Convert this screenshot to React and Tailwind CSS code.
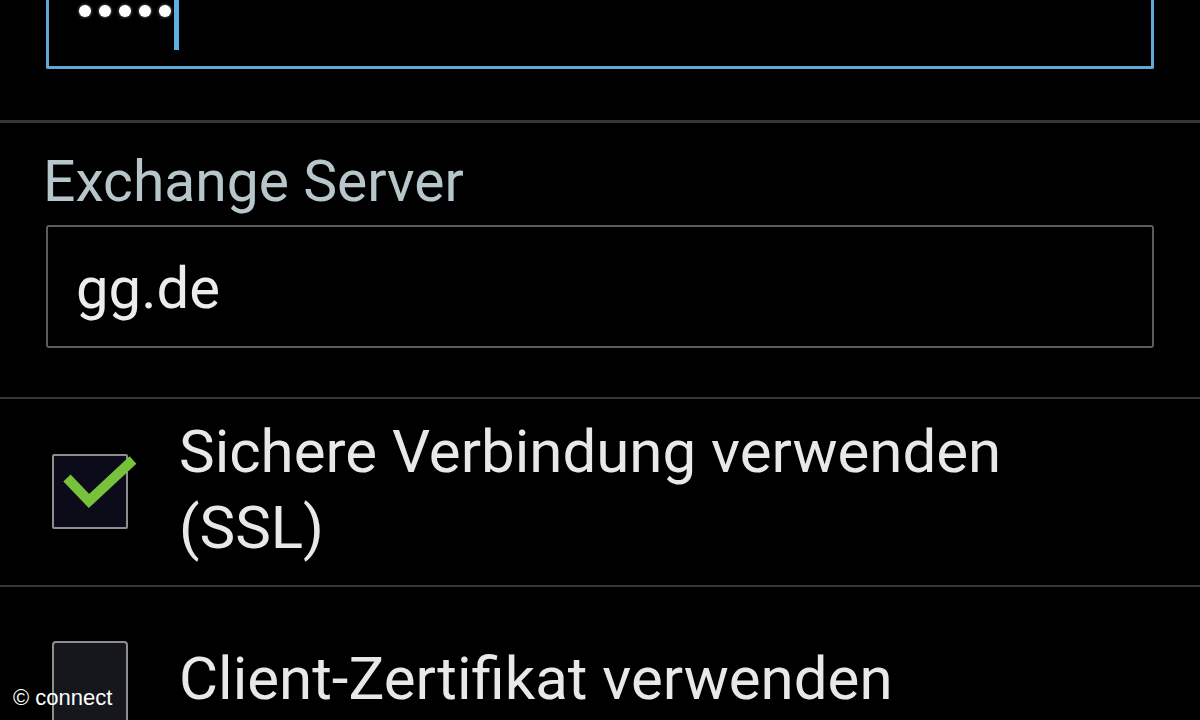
export default function App() {
  return (
    <div className="relative w-[1200px] h-[720px] overflow-hidden bg-black font-['Roboto',sans-serif] text-[#e8e8e8]">
      {/* top password field (cut off) */}
      <div className="px-[46px]">
        <div className="relative h-[69px] border-x-[3px] border-b-[3px] border-[#5ea9d6] rounded-b-[2px]">
          <div className="flex gap-[8px] pl-[30px] pt-[5px]">
            <span className="block w-[12px] h-[12px] rounded-full bg-white shadow-[0_0_3px_rgba(255,255,255,0.6)]" />
            <span className="block w-[12px] h-[12px] rounded-full bg-white shadow-[0_0_3px_rgba(255,255,255,0.6)]" />
            <span className="block w-[12px] h-[12px] rounded-full bg-white shadow-[0_0_3px_rgba(255,255,255,0.6)]" />
            <span className="block w-[12px] h-[12px] rounded-full bg-white shadow-[0_0_3px_rgba(255,255,255,0.6)]" />
            <span className="block w-[12px] h-[12px] rounded-full bg-white shadow-[0_0_3px_rgba(255,255,255,0.6)]" />
          </div>
          <div className="absolute left-[125px] top-0 w-[5px] h-[50px] bg-[#5eb0e0]" />
        </div>
      </div>

      {/* divider */}
      <div className="mt-[51px] h-[3px] bg-[#363636]" />

      {/* Exchange Server label */}
      <div className="mt-[30px] pl-[43px] text-[57px] leading-[57px] text-[#b7c6ca]">Exchange Server</div>

      {/* server field */}
      <div className="mt-[15px] px-[46px]">
        <div className="flex items-center h-[123px] border-2 border-[#5c5c5c] rounded-[3px] pl-[28px] pt-[2px]">
          <span className="text-[58px] leading-[58px] text-[#ececec]">gg.de</span>
        </div>
      </div>

      {/* divider */}
      <div className="mt-[49px] h-[2px] bg-[#363636]" />

      {/* SSL checkbox row */}
      <div className="flex items-start h-[186px] pl-[52px] pt-[15px]">
        <div className="relative mt-[40px] w-[76px] h-[75px] border-2 border-[#8e8e8e] bg-[#0c0b1a] rounded-[2px] shrink-0">
          <svg className="absolute left-0 top-0 overflow-visible" width="76" height="75" viewBox="0 0 76 75">
            <polyline points="13,22 35,45 79,4" fill="none" stroke="#77c23a" strokeWidth="10" strokeLinecap="butt" strokeLinejoin="miter" />
          </svg>
        </div>
        <div className="ml-[51px] text-[60px] leading-[76px] text-[#e8e8e8]">
          Sichere Verbindung verwenden
          <br />
          (SSL)
        </div>
      </div>

      {/* divider */}
      <div className="h-[2px] bg-[#363636]" />

      {/* client certificate row */}
      <div className="flex items-start pl-[52px] pt-[54px]">
        <div className="w-[76px] h-[90px] border-2 border-[#8e8e8e] bg-[#15171c] rounded-[4px] shrink-0" />
        <div className="ml-[51px] text-[60px] leading-[76px] text-[#e8e8e8]">Client-Zertifikat verwenden</div>
      </div>

      {/* watermark */}
      <div className="absolute left-[13px] bottom-[10px] font-['Liberation_Sans',sans-serif] text-[22px] leading-[24px] text-white">
        © connect
      </div>
    </div>
  );
}
